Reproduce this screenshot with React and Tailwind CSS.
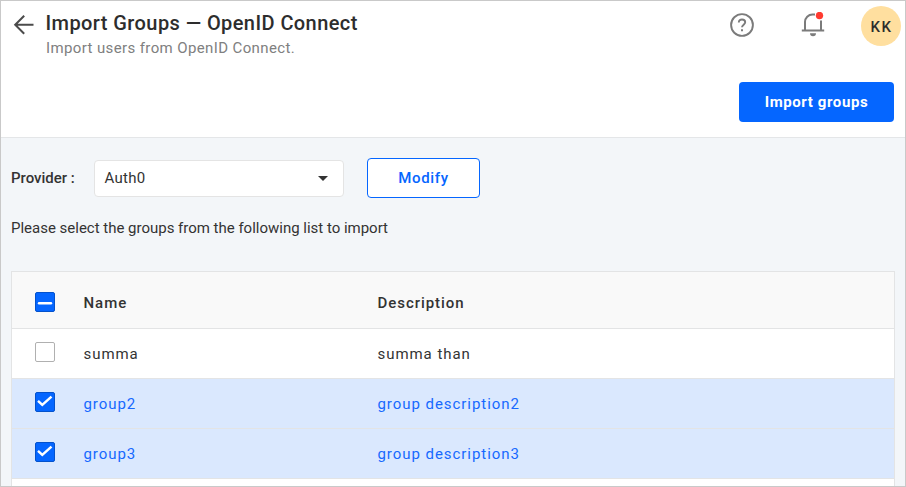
import React from "react";

const rows = [
  { name: "summa", description: "summa than", selected: false },
  { name: "group2", description: "group description2", selected: true },
  { name: "group3", description: "group description3", selected: true },
];

function Checkbox({ state }) {
  if (state === "off") {
    return <span className="block size-5 rounded-[2px] border border-[#b0b0b0] bg-white" />;
  }
  return (
    <span className="block size-5 rounded-[2px] border border-[#0452cc] bg-[#0566ff]">
      <svg viewBox="0 0 18 18" className="block size-[18px]" fill="none" stroke="#fff">
        {state === "mixed" ? (
          <path d="M3 10.3h12" strokeWidth="2.4" strokeLinecap="round" />
        ) : (
          <path d="M2 7.9l4.3 4L15.5 3.6" strokeWidth="2.5" />
        )}
      </svg>
    </span>
  );
}

function Header() {
  return (
    <header className="h-[137px] shrink-0 border-b border-[#e4e6e8] bg-white">
      <div className="flex h-[81px] items-start">
        <svg viewBox="0 0 22 22" className="mt-[13px] ml-3 size-[22px]" fill="none" stroke="#4b4b4b" strokeWidth="2">
          <path d="M20.5 10.8H2.5M11.2 1.8L2.2 10.8L11.2 19.8" />
        </svg>
        <div className="ml-[11px] flex-1">
          <h1 className="mt-2 -ml-[0.5px] text-[20px] leading-7 font-medium tracking-[0.42px] whitespace-nowrap text-[#2d2d2d]">
            Import Groups — OpenID Connect
          </h1>
          <p className="text-[15px] leading-[22px] tracking-[0.38px] text-[#808080]">Import users from OpenID Connect.</p>
        </div>
        <svg viewBox="0 0 24 24" className="mt-3 size-6" fill="none" stroke="#7b7b7b" strokeWidth="1.9">
          <circle cx="12" cy="12" r="10.9" />
          <path d="M8.8 9.4c0-1.7 1.3-2.9 3.2-2.9s3.2 1.1 3.2 2.8c0 2.3-3.2 2.6-3.2 5" />
          <path d="M11 17.2h2" />
        </svg>
        <svg viewBox="0 0 24 26" className="mt-[11px] ml-[47px] h-[26px] w-6" fill="none">
          <path d="M0.8 18.4h22.4M4 18V10a7.5 7.5 0 0 1 7.5-7.5H14M20 8.5V18" stroke="#7b7b7b" strokeWidth="2" />
          <path d="M9 21.2h6a3 3 0 0 1-6 0z" fill="#7b7b7b" />
          <circle cx="18.5" cy="3.5" r="3.7" fill="#ff3b30" />
        </svg>
        <div className="mt-[5px] mr-1 ml-9 flex size-10 items-center justify-center rounded-full bg-[#ffdf9f] pt-[2px] pl-px text-[15px] font-medium tracking-[1.6px] text-[#2d2d2d]">
          KK
        </div>
      </div>
      <div className="flex justify-end pr-[11px]">
        <button className="h-10 w-[155px] rounded bg-[#0566ff] text-[15px] font-bold tracking-[0.6px] text-white">
          Import groups
        </button>
      </div>
    </header>
  );
}

export default function App() {
  return (
    <div className="flex h-[487px] w-[906px] flex-col overflow-hidden border border-[#c9c9c9] bg-[#f3f6f9] font-['Roboto',sans-serif] text-[#333]">
      <Header />
      <main className="flex min-h-0 flex-1 flex-col px-[10px] pt-5">
        <div className="flex h-10 items-center">
          <span className="w-[83px] text-[15px] font-medium">Provider :</span>
          <div className="mr-[23px] flex h-[37px] w-[250px] items-center justify-between rounded border border-[#e4e4e4] bg-white pr-[15px] pl-[10px]">
            <span className="-ml-[0.5px] text-[15px] tracking-[0.3px]">Auth0</span>
            <svg viewBox="0 0 10 5" className="h-[5px] w-[10px]" fill="#333">
              <path d="M0 0h10L5 5z" />
            </svg>
          </div>
          <button className="h-10 w-[113px] rounded border border-[#0566ff] bg-white text-[15px] font-medium tracking-[0.65px] text-[#0566ff]">
            Modify
          </button>
        </div>
        <p className="mt-5 text-[15px] leading-5 tracking-[-0.01px]">Please select the groups from the following list to import</p>
        <div className="mt-[33px] w-[884px] flex-1 border border-b-0 border-[#e3e4e5] bg-white">
          <div className="grid h-[57px] grid-cols-[72px_294px_1fr] items-center border-b border-[#e3e4e5] bg-[#f9f9f9] pt-1 text-[15px] font-medium tracking-[0.95px]">
            <div className="pl-[23px]"><Checkbox state="mixed" /></div>
            <div className="-ml-[0.5px] pt-[2px]">Name</div>
            <div className="-ml-[0.5px] pt-[2px]">Description</div>
          </div>
          {rows.map((row) => (
            <div
              key={row.name}
              className={`grid h-[50px] grid-cols-[72px_294px_1fr] items-center border-b border-[#e3e4e5] text-[15px] tracking-[0.95px] ${
                row.selected ? "bg-[#dae8fe] text-[#1668ff]" : ""
              }`}
            >
              <div className="-mt-[3px] pl-[23px]"><Checkbox state={row.selected ? "on" : "off"} /></div>
              <div className="-ml-[0.5px] pt-[2px]">{row.name}</div>
              <div className="-ml-[0.5px] pt-[2px]">{row.description}</div>
            </div>
          ))}
        </div>
      </main>
    </div>
  );
}
